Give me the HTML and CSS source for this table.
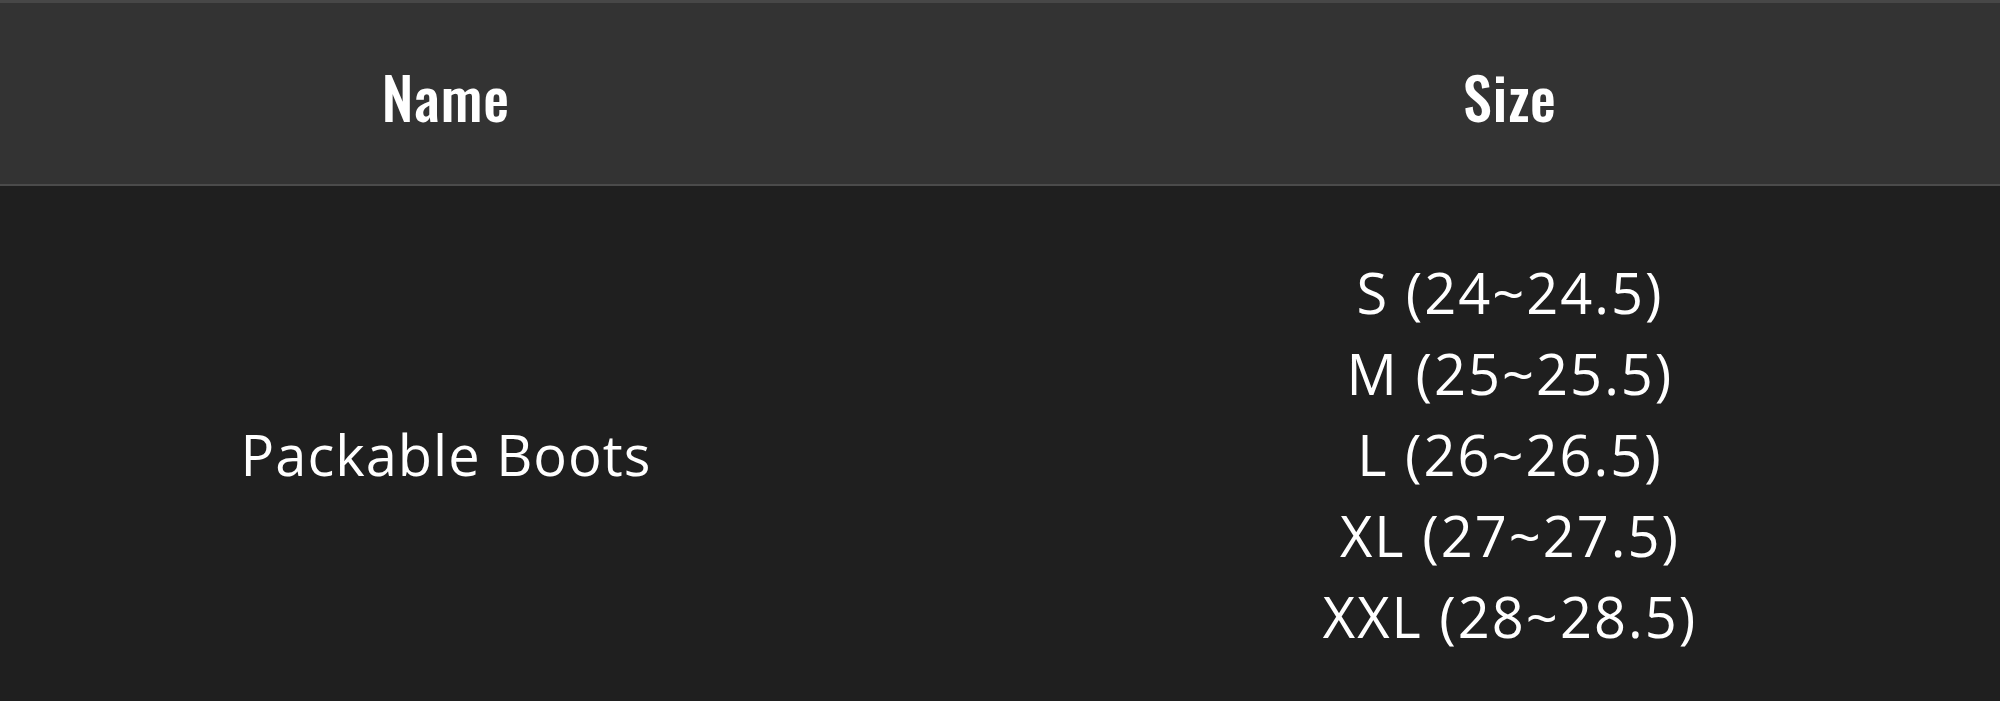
FILE: index.html
```html
<!DOCTYPE html>
<html lang="en">
<head>
<meta charset="utf-8">
<title>Size table</title>
<link rel="stylesheet" href="styles.css">
</head>
<body>
<table class="size-table">
  <colgroup>
    <col class="col-name">
    <col class="col-size">
  </colgroup>
  <thead>
    <tr>
      <th class="head-name">Name</th>
      <th class="head-size">Size</th>
    </tr>
  </thead>
  <tbody>
    <tr>
      <td class="cell-name">Packable Boots</td>
      <td class="cell-size">
        <div class="size-line">S (24~24.5)</div>
        <div class="size-line">M (25~25.5)</div>
        <div class="size-line">L (26~26.5)</div>
        <div class="size-line">XL (27~27.5)</div>
        <div class="size-line">XXL (28~28.5)</div>
      </td>
    </tr>
  </tbody>
</table>
</body>
</html>
```

FILE: styles.css
```css
html, body {
  margin: 0;
  padding: 0;
  background: #1f1f1f;
  overflow: hidden;
}

.size-table {
  width: 2000px;
  table-layout: fixed;
  border-collapse: collapse;
  color: #ffffff;
}

.col-name { width: 892px; }
.col-size { width: 1108px; }

.size-table thead tr {
  background: #333333;
}

.size-table th {
  height: 177px;
  padding: 4px 0 0;
  border-top: 3px solid #474747;
  border-bottom: 2px solid #4b4b4b;
  text-align: center;
  vertical-align: middle;
  font-family: "Oswald", "DejaVu Sans Condensed", "DejaVu Sans", sans-serif;
  font-weight: 500;
  font-size: 58px;
  line-height: 1;
  letter-spacing: 1px;
}

.size-table th.head-size,
.size-table td.cell-size {
  padding-left: 128px;
}

.size-table td {
  padding: 66px 0 60px;
  text-align: center;
  vertical-align: middle;
  font-family: "Open Sans", "Noto Sans", sans-serif;
  font-size: 56px;
  line-height: 81px;
}

.cell-name {
  letter-spacing: 1px;
}

.size-line {
  white-space: nowrap;
  letter-spacing: 2px;
}
```
